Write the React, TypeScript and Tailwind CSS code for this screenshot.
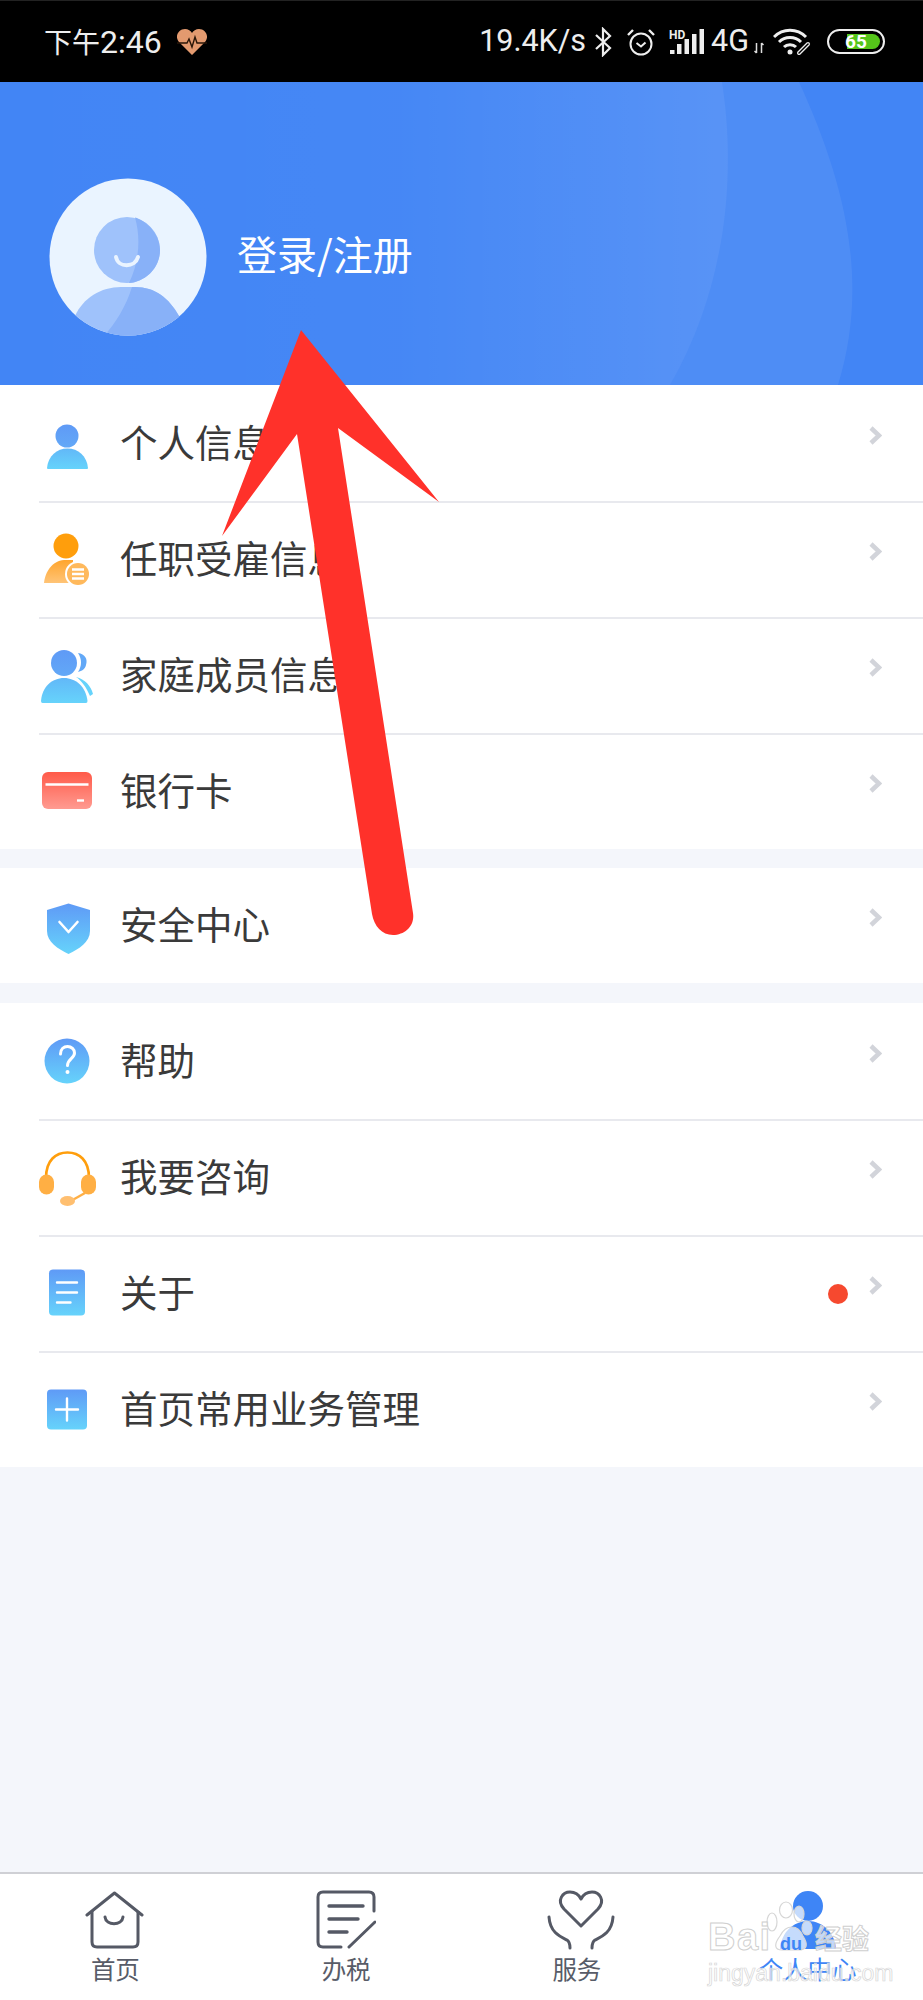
import type { ReactNode } from 'react'

const CJK = "font-['Noto_Sans_CJK_SC','Noto_Sans_CJK_JP',sans-serif]"

function Grad({ id, from, to }: { id: string; from: string; to: string }) {
  return (
    <defs>
      <linearGradient id={id} x1="0" y1="0" x2="0" y2="1">
        <stop offset="0" stopColor={from} />
        <stop offset="1" stopColor={to} />
      </linearGradient>
    </defs>
  )
}

function RowIcon({ children }: { children: ReactNode }) {
  return (
    <svg width="60" height="60" viewBox="0 0 60 60" className="shrink-0 overflow-visible">
      {children}
    </svg>
  )
}

const BLUE_A = '#5f9af6'
const BLUE_B = '#66d3fb'

function IconPerson() {
  return (
    <RowIcon>
      <Grad id="p1a" from={BLUE_A} to="#62a8f7" />
      <Grad id="p1b" from="#62b8f8" to={BLUE_B} />
      <circle cx="28" cy="22" r="11.5" fill="url(#p1a)" />
      <path d="M8 54C9 42 18 34.500 28.500 34.500C39 34.500 48 42 49 54Q49 55 48 55H9Q8 55 8 54Z" fill="url(#p1b)" />
    </RowIcon>
  )
}

function IconJob() {
  return (
    <RowIcon>
      <Grad id="p2b" from="#ffa52d" to="#ffc477" />
      <circle cx="27" cy="16" r="12.500" fill="#ff9e0c" />
      <path d="M5 53C6 42 13 31 25 30H34V53Z" fill="url(#p2b)" />
      <circle cx="39" cy="44" r="13" fill="#fff" />
      <circle cx="39" cy="44" r="11" fill="#ffb95c" />
      <path d="M33 39.500H45M33 44H45M33 48.500H45" stroke="#fff" strokeWidth="2.400" />
    </RowIcon>
  )
}

function IconFamily() {
  return (
    <RowIcon>
      <Grad id="p3a" from={BLUE_A} to="#62a8f7" />
      <Grad id="p3b" from="#62b8f8" to={BLUE_B} />
      <path d="M39 7C46 8 49 13 47 19C46 23 43 25 39 26C43 20 43 13 39 7Z" fill="#62a8f7" />
      <path d="M37 31C46 33 52 40 54 48L51 50C47 41 43 35 37 31Z" fill={BLUE_B} />
      <circle cx="25" cy="17" r="13" fill="url(#p3a)" />
      <path d="M2 55C3 41 13 32 25 32C37 32 47 41 48.500 55Q48.500 57 47 57H3.500Q2 57 2 55Z" fill="url(#p3b)" />
    </RowIcon>
  )
}

function IconCard() {
  return (
    <RowIcon>
      <Grad id="c1" from="#ff5a49" to="#ff9b91" />
      <rect x="3" y="10" width="50" height="37" rx="6" fill="url(#c1)" />
      <path d="M6.500 22.500H49.500" stroke="#fff" strokeWidth="2.400" />
      <path d="M38 38.500H45" stroke="#fff" strokeWidth="2.400" />
    </RowIcon>
  )
}

function IconShield() {
  return (
    <RowIcon>
      <Grad id="s1" from={BLUE_A} to={BLUE_B} />
      <path d="M29.500 7.500L51 14V35C51 46 40 53 29.500 58C19 53 8 46 8 35V14Z" fill="url(#s1)" />
      <path d="M20.500 26L29.500 36L38.500 26" fill="none" stroke="#fff" strokeWidth="2.600" strokeLinecap="round" strokeLinejoin="round" />
    </RowIcon>
  )
}

function IconHelp() {
  return (
    <RowIcon>
      <Grad id="h1" from={BLUE_A} to={BLUE_B} />
      <circle cx="28" cy="29" r="22.500" fill="url(#h1)" />
      <path d="M21.500 22C21.500 17 25 14.500 28.500 14.500C32.500 14.500 35.500 17.500 35.500 21C35.500 26.500 28.500 27 28.500 33.500" fill="none" stroke="#fff" strokeWidth="3" strokeLinecap="round" />
      <circle cx="28.500" cy="40" r="2" fill="#fff" />
    </RowIcon>
  )
}

function IconHeadset() {
  return (
    <RowIcon>
      <path d="M7 30C7 12 17 4.500 28.500 4.500C40 4.500 50 12 50 30" fill="none" stroke="#ff9e0c" strokeWidth="2.600" />
      <rect x="0" y="26.500" width="15" height="20" rx="7.500" fill="#ffaf44" />
      <rect x="42" y="26.500" width="15" height="20" rx="7.500" fill="#ffaf44" />
      <path d="M30 54L46 45" stroke="#ffaf44" strokeWidth="2.400" />
      <ellipse cx="28.500" cy="53" rx="7.500" ry="5" fill="#ffbf70" />
    </RowIcon>
  )
}

function IconDoc() {
  return (
    <RowIcon>
      <Grad id="d1" from={BLUE_A} to={BLUE_B} />
      <rect x="10" y="5.500" width="36" height="46" rx="4" fill="url(#d1)" />
      <path d="M18 18.500H38M18 28.500H38M18 38.500H31.500" stroke="#fff" strokeWidth="2.400" strokeLinecap="round" />
    </RowIcon>
  )
}

function IconPlus() {
  return (
    <RowIcon>
      <Grad id="e1" from={BLUE_A} to={BLUE_B} />
      <rect x="8" y="9.500" width="40" height="40" rx="4" fill="url(#e1)" />
      <path d="M17 29.500H39M28 18.500V40.500" stroke="#fff" strokeWidth="2.400" strokeLinecap="round" />
    </RowIcon>
  )
}

function MenuRow({ icon, label, last, dot }: { icon: ReactNode; label: string; last?: boolean; dot?: boolean }) {
  return (
    <div className={`ml-[39px] flex items-center pr-[41px] border-[#e8e9ee] ${last ? 'h-[114px]' : 'h-[116px] border-b-2'}`}>
      {icon}
      <span className="ml-[21px] mb-[6px] flex-1 text-[37.5px] leading-none text-[#3a3a3a]">{label}</span>
      {dot && <span className="w-[20px] h-[20px] rounded-full bg-[#f6492f] mr-[21px]" />}
      <svg width="13" height="19" viewBox="0 0 13 19" className="mb-[18px] shrink-0">
        <path d="M2 2L10 9.500L2 17" fill="none" stroke="#d2d4da" strokeWidth="4.500" />
      </svg>
    </div>
  )
}

function StatusBar() {
  return (
    <div className="h-[82px] bg-black flex items-center border-t border-[#222222] text-[#eeeeee] font-['Roboto','Noto_Sans_CJK_SC',sans-serif] text-[30.5px] leading-none">
      <span className="ml-[44px] flex items-baseline">
        <span className="text-[28px]">下午</span>
        <span className="text-[32px]">2:46</span>
      </span>
      <svg width="32" height="28" viewBox="0 0 32 28" className="ml-[14px]">
        <path d="M16 27L3 14C-2 8 3 1 9 1C12 1 15 3 16 5C17 3 20 1 23 1C29 1 34 8 29 14Z" fill="#e39a6f" />
        <path d="M1 15H11L13 11L16 19L19 9L21 15H31" fill="none" stroke="#2a1608" strokeWidth="1.400" />
      </svg>
      <div className="ml-auto flex items-center mr-[38px]">
        <span>19.4K/s</span>
        <svg width="18" height="30" viewBox="0 0 18 30" className="ml-[8px]">
          <path d="M2 8L16 21L9 28V2L16 9L2 22" fill="none" stroke="#eeeeee" strokeWidth="2.200" />
        </svg>
        <svg width="28" height="28" viewBox="0 0 28 28" className="ml-[15px]">
          <circle cx="14" cy="16" r="10.500" fill="none" stroke="#eeeeee" strokeWidth="2" />
          <path d="M9.500 15L14 18.500L18.500 14.500" fill="none" stroke="#eeeeee" strokeWidth="2" />
          <path d="M1 7L6 2M27 7L22 2" stroke="#eeeeee" strokeWidth="2.400" />
        </svg>
        <div className="relative ml-[14px] w-[36px] h-[26px]">
          <span className="absolute left-0 top-0 text-[12px] font-bold leading-none">HD</span>
          <svg width="36" height="26" viewBox="0 0 36 26" className="absolute inset-0">
            <rect x="1" y="21" width="4.500" height="4" fill="#eeeeee" />
            <rect x="8" y="15" width="4.500" height="10" fill="#eeeeee" />
            <rect x="15.500" y="10" width="4.500" height="15" fill="#eeeeee" />
            <rect x="23" y="5" width="4.500" height="20" fill="#eeeeee" />
            <rect x="30.500" y="0" width="4.500" height="25" fill="#eeeeee" />
          </svg>
        </div>
        <span className="ml-[6px]">4G</span>
        <svg width="10" height="12" viewBox="0 0 10 12" className="ml-[5px] mt-[12px]">
          <path d="M2.500 1V11M0.500 9L2.500 11M7.500 1V11M7.500 1L9.500 3" fill="none" stroke="#dddddd" strokeWidth="1.500" />
        </svg>
        <svg width="40" height="28" viewBox="0 0 40 28" className="ml-[9px]">
          <path d="M1 9C10 0 24 0 33 9M6 14C12 8 22 8 28 14M11 19C14 16 20 16 23 19" fill="none" stroke="#eeeeee" strokeWidth="3" />
          <circle cx="17" cy="24" r="2.500" fill="#eeeeee" />
          <path d="M26 25L35 16" stroke="#eeeeee" strokeWidth="4" strokeLinecap="round" />
          <path d="M26 25L35 16" stroke="#000000" strokeWidth="1.500" strokeLinecap="round" />
        </svg>
        <div className="relative ml-[14px] w-[58px] h-[25px] rounded-full border-2 border-[#eeeeee] flex items-center">
          <div className="absolute left-[18px] top-[3px] bottom-[3px] right-[3px] rounded-r-full bg-[#55c51a]" />
          <span className="relative ml-[16px] text-[19px] font-bold text-[#ffffff]">65</span>
        </div>
      </div>
    </div>
  )
}

function ProfileHeader() {
  return (
    <div className="relative h-[303px] bg-[#4285f5] flex items-center overflow-hidden">
      {/* the two pale arcs behind the header */}
      <svg width="923" height="303" viewBox="0 0 923 303" className="absolute inset-0">
        <defs>
          <linearGradient id="arcfade" x1="0" y1="0" x2="1" y2="0">
            <stop offset="0" stopColor="#ffffff" stopOpacity="0" />
            <stop offset="0.55" stopColor="#ffffff" stopOpacity="0.02" />
            <stop offset="1" stopColor="#ffffff" stopOpacity="0.12" />
          </linearGradient>
        </defs>
        <path d="M722 0C733 70 735 190 670 303H0V0Z" fill="url(#arcfade)" />
        <path d="M799 0C845 100 870 200 838 303H670C735 190 733 70 722 0Z" fill="#ffffff" fillOpacity="0.065" />
      </svg>
      <svg width="158" height="158" viewBox="0 0 158 158" className="relative ml-[49px] mt-[47px] shrink-0">
        <defs>
          <clipPath id="avatarclip">
            <circle cx="79" cy="79" r="78.500" />
          </clipPath>
        </defs>
        <circle cx="79" cy="79" r="78.500" fill="#eaf4ff" />
        <g clipPath="url(#avatarclip)">
          <circle cx="78" cy="72" r="33" fill="#9fc2fb" />
          <path d="M86 39.500C96 42 111 55 111 72C111 90 96 104 80 105C90 85 92 60 86 39.500Z" fill="#88b1f8" />
          <path d="M26 138C34 120 52 109 72 109H86C106 109 120 120 130 138V165H26Z" fill="#9fc2fb" />
          <path d="M83 109H86C106 109 120 120 130 138V165H48C62 152 76 132 83 109Z" fill="#88b1f8" />
        </g>
        <path d="M67 79C69 90 86 90 89 79" fill="none" stroke="#eaf4ff" strokeWidth="4" strokeLinecap="round" />
      </svg>
      <span className="relative ml-[30px] mt-[39px] text-[40px] leading-none text-white">登录/注册</span>
    </div>
  )
}

function TabItem({ icon, label, active }: { icon: ReactNode; label: string; active?: boolean }) {
  return (
    <div className="flex flex-col items-center pt-[16px]">
      {icon}
      <span className={`mt-[4px] text-[24.5px] leading-[30px] ${active ? 'text-[#3e85f6]' : 'text-[#585c68]'}`}>{label}</span>
    </div>
  )
}

function TabBar() {
  const stroke = '#555965'
  return (
    <div className="relative h-[128px] bg-white border-t-2 border-[#cfd0d5] grid grid-cols-4">
      <TabItem
        label="首页"
        icon={
          <svg width="60" height="60" viewBox="0 0 60 60">
            <path d="M2 25L29.500 3L57 25" fill="none" stroke={stroke} strokeWidth="3" strokeLinecap="round" strokeLinejoin="round" />
            <path d="M7 21V52Q7 57 12 57H48Q53 57 53 52V21" fill="none" stroke={stroke} strokeWidth="3" />
            <path d="M20 27C21 36 37 36 38 27" fill="none" stroke={stroke} strokeWidth="3" strokeLinecap="round" />
          </svg>
        }
      />
      <TabItem
        label="办税"
        icon={
          <svg width="60" height="60" viewBox="0 0 60 60">
            <path d="M25 57H7Q2 57 2 52V7Q2 2 7 2H53Q58 2 58 7V21" fill="none" stroke={stroke} strokeWidth="3" strokeLinecap="round" />
            <path d="M13 16H47M13 29H42M13 42H31" stroke={stroke} strokeWidth="3.400" strokeLinecap="round" />
            <path d="M33 57L59 32" stroke={stroke} strokeWidth="3" strokeLinecap="round" />
          </svg>
        }
      />
      <TabItem
        label="服务"
        icon={
          <svg width="80" height="60" viewBox="0 0 80 60">
            <path d="M44 36L27 19C19 10 26 2 33 2C38 2 42 5 44 9C46 5 50 2 55 2C62 2 69 10 61 19Z" fill="none" stroke={stroke} strokeWidth="3" strokeLinejoin="round" />
            <path d="M12 27C13 43 24 47 30 50C33 52 33 55 33 58" fill="none" stroke={stroke} strokeWidth="3" strokeLinecap="round" />
            <path d="M76 27C75 43 64 47 58 50C55 52 55 55 55 58" fill="none" stroke={stroke} strokeWidth="3" strokeLinecap="round" />
          </svg>
        }
      />
      <TabItem
        label="个人中心"
        active
        icon={
          <svg width="60" height="60" viewBox="0 0 60 60">
            <circle cx="30" cy="16" r="15" fill="#3e85f6" />
            <path d="M2 59C3 43 15 31 30 31C45 31 57 43 58 59Z" fill="#3e85f6" />
          </svg>
        }
      />
    </div>
  )
}

export default function App() {
  return (
    <div className={`relative w-[923px] h-[2000px] overflow-hidden flex flex-col bg-[#f4f6fb] ${CJK}`}>
      <StatusBar />
      <ProfileHeader />

      <div className="bg-white pt-[2px]">
        <MenuRow icon={<IconPerson />} label="个人信息" />
        <MenuRow icon={<IconJob />} label="任职受雇信息" />
        <MenuRow icon={<IconFamily />} label="家庭成员信息" />
        <MenuRow icon={<IconCard />} label="银行卡" last />
      </div>

      <div className="mt-[19px] bg-white pt-[1px]">
        <MenuRow icon={<IconShield />} label="安全中心" last />
      </div>

      <div className="mt-[20px] bg-white pt-[2px]">
        <MenuRow icon={<IconHelp />} label="帮助" />
        <MenuRow icon={<IconHeadset />} label="我要咨询" />
        <MenuRow icon={<IconDoc />} label="关于" dot />
        <MenuRow icon={<IconPlus />} label="首页常用业务管理" last />
      </div>

      <div className="flex-1" />
      <TabBar />

      {/* red arrow painted over the screenshot */}
      <svg width="923" height="2000" viewBox="0 0 923 2000" className="absolute inset-0 pointer-events-none">
        <path
          d="M301 330L439 502L338 428L413 913C415 926 405 935 393 935C382 935 374 926 372 914L297 434L222 536Z"
          fill="#ff312a"
        />
      </svg>

      {/* baidu watermark */}
      <div className="absolute left-[708px] top-[1900px] w-[170px] h-[90px] pointer-events-none">
        <svg width="170" height="60" viewBox="0 0 170 60" className="absolute left-0 top-0">
          <g fill="#ffffff" fillOpacity="0.7" stroke="#d6d6d6" strokeWidth="1.200">
            <ellipse cx="64" cy="22" rx="5" ry="9" />
            <ellipse cx="78" cy="10" rx="6.500" ry="8" />
            <ellipse cx="91" cy="14" rx="5" ry="8" />
            <ellipse cx="99" cy="28" rx="5" ry="7" />
            <path d="M72 36C78 24 90 24 95 36C100 44 100 50 90 50H74C66 50 66 44 72 36Z" />
          </g>
        </svg>
        <span className="absolute left-0 top-[18px] font-['Liberation_Sans',sans-serif] text-[38px] font-bold tracking-[1.500px] leading-none text-white/70 [-webkit-text-stroke:1px_#cfcfcf]">
          Bai
        </span>
        <span className="absolute left-[72px] top-[35px] font-['Liberation_Sans',sans-serif] text-[18px] font-bold leading-none text-[#3e85f6]">
          du
        </span>
        <span className="absolute left-[107px] top-[24px] text-[27px] font-bold leading-none text-white/70 [-webkit-text-stroke:1px_#cfcfcf]">
          经验
        </span>
        <span className="absolute left-0 top-[62px] font-['Liberation_Sans',sans-serif] text-[23px] leading-none whitespace-nowrap text-white/60 [-webkit-text-stroke:0.7px_#d6d6d6]">
          jingyan.baidu.com
        </span>
      </div>
    </div>
  )
}
